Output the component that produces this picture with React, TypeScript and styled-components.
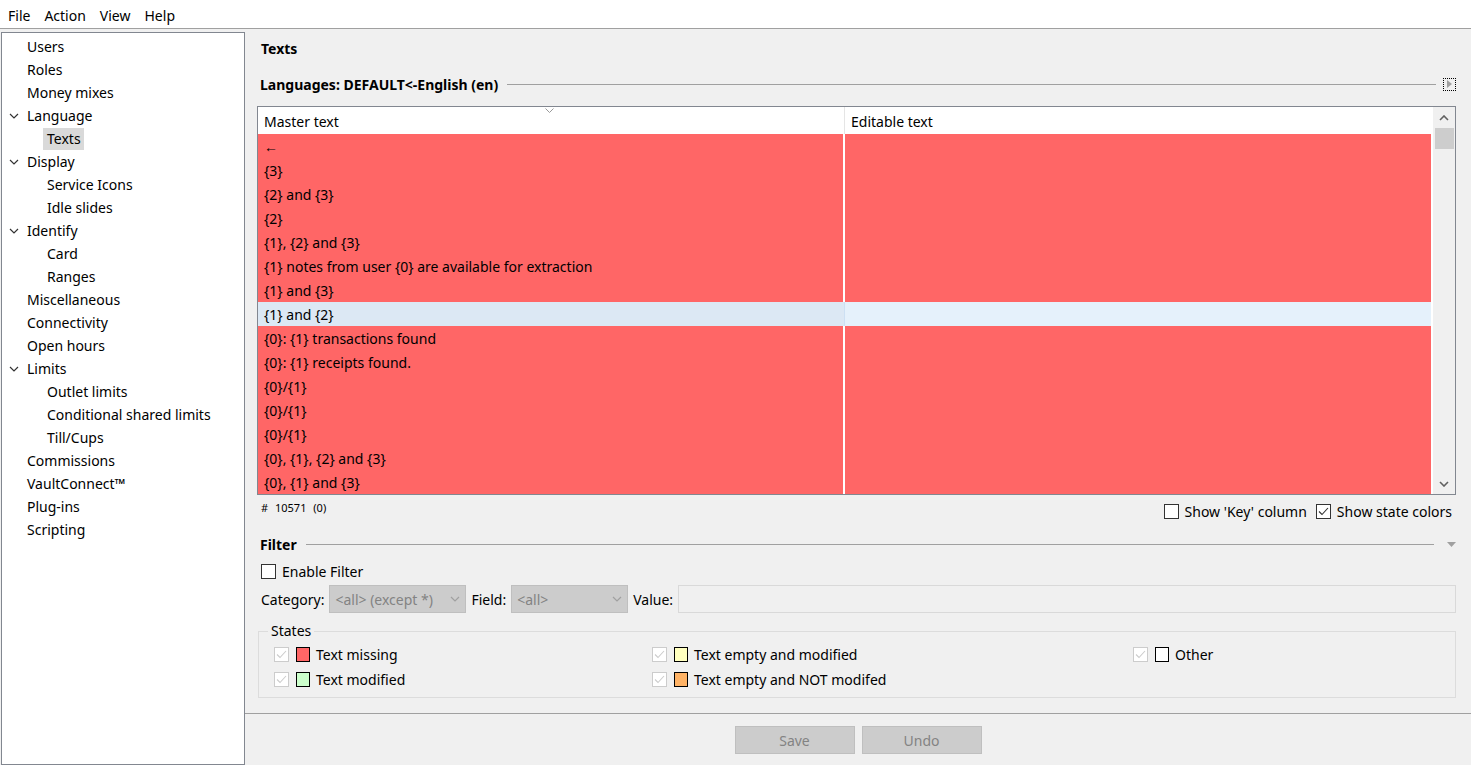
import React from "react";
import styled, { createGlobalStyle } from "styled-components";

const GlobalStyle = createGlobalStyle`
  html, body { margin: 0; padding: 0; }
  body {
    font-family: "Segoe UI", "Noto Sans", "Open Sans", sans-serif;
    font-size: 14px;
    color: #000;
    background: #f0f0f0;
  }
`;

const Window = styled.div`
  width: 1471px;
  height: 765px;
  display: flex;
  flex-direction: column;
  overflow: hidden;
`;

const MenuBar = styled.div`
  height: 29px;
  background: #fff;
  border-bottom: 1px solid #a0a0a0;
  display: flex;
  align-items: center;
  padding: 3px 0 0 1px;
  box-sizing: border-box;
`;

const MenuItem = styled.div`
  padding: 0 7px;
  line-height: 26px;
`;

const Body = styled.div`
  flex: 1;
  display: flex;
  padding-top: 3px;
  min-height: 0;
`;

const Tree = styled.div`
  width: 244px;
  margin-left: 1px;
  background: #fff;
  border: 1px solid #828790;
  box-sizing: border-box;
  padding-top: 2px;
`;

const TreeRow = styled.div<{ $depth: number }>`
  height: 23px;
  display: flex;
  align-items: center;
  padding-left: ${(p) => (p.$depth === 0 ? 1 : 41)}px;
`;

const Chevron = styled.span`
  width: 20px;
  display: inline-flex;
  justify-content: center;
  margin-left: 1px;
  margin-right: -1px;
`;

const TreeLabel = styled.span<{ $selected?: boolean }>`
  padding: 1px 3px 2px 4px;
  background: ${(p) => (p.$selected ? "#d9d9d9" : "transparent")};
`;

const Main = styled.div`
  flex: 1;
  display: flex;
  flex-direction: column;
  min-width: 0;
`;

const Content = styled.div`
  flex: 1;
  padding: 5px 15px 0 12px;
  display: flex;
  flex-direction: column;
`;

const PageTitle = styled.div`
  font-weight: bold;
  height: 24px;
  line-height: 24px;
  padding-left: 4px;
  margin-bottom: 11px;
`;

const SectionHead = styled.div`
  display: flex;
  align-items: center;
  height: 24px;
  font-weight: bold;
  padding-left: 3px;
  gap: 9px;
`;

const SectionLine = styled.div`
  flex: 1;
  height: 1px;
  background: #a0a0a0;
`;

const ExpandIcon = styled.div`
  width: 11px;
  height: 11px;
  border: 1px dotted #000;
  display: flex;
  align-items: center;
  justify-content: center;
  margin-left: -2px;
`;

const TableBox = styled.div`
  margin-top: 10px;
  height: 389px;
  border: 1px solid #828790;
  background: #fff;
  display: flex;
  box-sizing: border-box;
  overflow: hidden;
`;

const TableMain = styled.div`
  flex: 1;
  display: flex;
  flex-direction: column;
  min-width: 0;
`;

const HeaderRow = styled.div`
  height: 27px;
  flex-shrink: 0;
  display: grid;
  grid-template-columns: 587px 1fr;
  position: relative;
`;

const HeaderCell = styled.div<{ $last?: boolean }>`
  padding-left: 6px;
  display: flex;
  align-items: flex-end;
  padding-bottom: 3px;
  border-right: ${(p) => (p.$last ? "none" : "1px solid #e5e5e5")};
`;

const SortMark = styled.svg`
  position: absolute;
  left: 287px;
  top: 1px;
`;

const Row = styled.div`
  height: 24px;
  flex-shrink: 0;
  display: grid;
  grid-template-columns: 587px 1fr;
`;

const Cell = styled.div<{ $bg: string; $last?: boolean; $selected?: boolean }>`
  background: ${(p) => p.$bg};
  padding-left: 6px;
  display: flex;
  align-items: center;
  white-space: nowrap;
  overflow: hidden;
  border-right: ${(p) =>
    p.$last ? "none" : p.$selected ? "1px solid #cde0f3" : "2px solid #fff"};
  box-sizing: border-box;
`;

const ScrollBar = styled.div`
  width: 22px;
  margin-left: 2px;
  background: #f0f0f0;
  display: flex;
  flex-direction: column;
  align-items: center;
`;

const ScrollBtn = styled.div`
  height: 21px;
  width: 100%;
  display: flex;
  align-items: center;
  justify-content: center;
`;

const ScrollTrack = styled.div`
  flex: 1;
  width: 100%;
  display: flex;
  justify-content: center;
`;

const Thumb = styled.div`
  width: 19px;
  height: 21px;
  background: #cdcdcd;
`;

const StatusRow = styled.div`
  display: flex;
  justify-content: space-between;
  align-items: center;
  height: 30px;
  padding-left: 4px;
`;

const Count = styled.div`
  font-size: 11px;
  margin-top: -5px;
  word-spacing: 4px;
`;

const CheckGroup = styled.div`
  display: flex;
  gap: 9px;
  margin-right: 4px;
  margin-top: 3px;
`;

const CheckLabel = styled.label`
  display: flex;
  align-items: center;
  gap: 6px;
  color: #000;
`;

const Box = styled.span<{ $disabled?: boolean }>`
  width: 13px;
  height: 13px;
  border: 1px solid ${(p) => (p.$disabled ? "#cccccc" : "#333")};
  background: #fff;
  display: inline-flex;
  align-items: center;
  justify-content: center;
  box-sizing: content-box;
`;

const Swatch = styled.span<{ $color: string }>`
  width: 12px;
  height: 13px;
  border: 1px solid #000;
  background: ${(p) => p.$color};
  margin-left: 1px;
`;

const FilterHead = styled(SectionHead)`
  margin-top: 7px;
`;

const FilterArrow = styled.svg`
  margin-left: 4px;
`;

const EnableRow = styled.div`
  height: 28px;
  display: flex;
  align-items: center;
  padding-left: 4px;
  margin-top: 1px;
`;

const FieldRow = styled.div`
  display: flex;
  align-items: center;
  gap: 5px;
  padding-left: 4px;
  height: 28px;
`;

const Select = styled.div<{ $w: number }>`
  width: ${(p) => p.$w}px;
  height: 28px;
  box-sizing: border-box;
  background: #cccccc;
  border: 1px solid #bfbfbf;
  color: #838383;
  display: flex;
  align-items: center;
  justify-content: space-between;
  padding: 0 5px;
`;

const ValueInput = styled.div`
  flex: 1;
  height: 26px;
  border: 1px solid #d9d9d9;
  background: #f0f0f0;
`;

const StatesBox = styled.fieldset`
  margin: 11px 0 0 1px;
  border: 1px solid #dcdcdc;
  padding: 4px 0 5px 15px;
  display: grid;
  grid-template-columns: 378px 481px 1fr;
  grid-auto-rows: 25px;
  align-items: center;
`;

const Legend = styled.legend`
  padding: 0 3px;
  margin-left: -6px;
  line-height: 14px;
`;

const Footer = styled.div`
  height: 52px;
  flex-shrink: 0;
  border-top: 1px solid #a0a0a0;
  display: flex;
  justify-content: center;
  gap: 7px;
  padding-top: 12px;
  box-sizing: border-box;
`;

const Button = styled.div`
  width: 120px;
  height: 28px;
  box-sizing: border-box;
  background: #cccccc;
  border: 1px solid #bfbfbf;
  color: #838383;
  display: flex;
  align-items: center;
  justify-content: center;
`;

const ChevronDown = ({ color = "#333" }: { color?: string }) => (
  <svg width="10" height="6" viewBox="0 0 10 6">
    <path d="M1 1l4 4 4-4" fill="none" stroke={color} strokeWidth="1.2" />
  </svg>
);

const Tick = ({ color }: { color: string }) => (
  <svg width="11" height="9" viewBox="0 0 11 9">
    <path d="M1 4.5l3 3 6-6.5" fill="none" stroke={color} strokeWidth="1.1" />
  </svg>
);

const treeItems: { label: string; depth: number; open?: boolean; selected?: boolean }[] = [
  { label: "Users", depth: 0 },
  { label: "Roles", depth: 0 },
  { label: "Money mixes", depth: 0 },
  { label: "Language", depth: 0, open: true },
  { label: "Texts", depth: 1, selected: true },
  { label: "Display", depth: 0, open: true },
  { label: "Service Icons", depth: 1 },
  { label: "Idle slides", depth: 1 },
  { label: "Identify", depth: 0, open: true },
  { label: "Card", depth: 1 },
  { label: "Ranges", depth: 1 },
  { label: "Miscellaneous", depth: 0 },
  { label: "Connectivity", depth: 0 },
  { label: "Open hours", depth: 0 },
  { label: "Limits", depth: 0, open: true },
  { label: "Outlet limits", depth: 1 },
  { label: "Conditional shared limits", depth: 1 },
  { label: "Till/Cups", depth: 1 },
  { label: "Commissions", depth: 0 },
  { label: "VaultConnect™", depth: 0 },
  { label: "Plug-ins", depth: 0 },
  { label: "Scripting", depth: 0 },
];

const rows = [
  "←",
  "{3}",
  "{2} and {3}",
  "{2}",
  "{1}, {2} and {3}",
  "{1} notes from user {0} are available for extraction",
  "{1} and {3}",
  "{1} and {2}",
  "{0}: {1} transactions found",
  "{0}: {1} receipts found.",
  "{0}/{1}",
  "{0}/{1}",
  "{0}/{1}",
  "{0}, {1}, {2} and {3}",
  "{0}, {1} and {3}",
];

const SELECTED = 7;
const RED = "#ff6666";

const states = [
  { label: "Text missing", color: RED },
  { label: "Text empty and modified", color: "#ffffbf" },
  { label: "Other", color: "#ffffff" },
  { label: "Text modified", color: "#ccffcc" },
  { label: "Text empty and NOT modifed", color: "#ffb366" },
];

export default function App() {
  return (
    <Window>
      <GlobalStyle />
      <MenuBar>
        {["File", "Action", "View", "Help"].map((m) => (
          <MenuItem key={m}>{m}</MenuItem>
        ))}
      </MenuBar>
      <Body>
        <Tree>
          {treeItems.map((t) => (
            <TreeRow key={t.label} $depth={t.depth}>
              {t.depth === 0 && (
                <Chevron>{t.open && <ChevronDown />}</Chevron>
              )}
              <TreeLabel $selected={t.selected}>{t.label}</TreeLabel>
            </TreeRow>
          ))}
        </Tree>
        <Main>
          <Content>
            <PageTitle>Texts</PageTitle>
            <SectionHead>
              <span>Languages: DEFAULT&lt;-English (en)</span>
              <SectionLine />
              <ExpandIcon>
                <svg width="5" height="8" viewBox="0 0 5 8">
                  <path d="M0 0l5 4-5 4z" fill="#a0a0a0" />
                </svg>
              </ExpandIcon>
            </SectionHead>
            <TableBox>
              <TableMain>
                <HeaderRow>
                  <HeaderCell>Master text</HeaderCell>
                  <HeaderCell $last>Editable text</HeaderCell>
                  <SortMark width="9" height="5" viewBox="0 0 9 5">
                    <path d="M0.5 0.5l4 4 4-4" fill="none" stroke="#999" strokeWidth="1" />
                  </SortMark>
                </HeaderRow>
                {rows.map((r, i) => {
                  const sel = i === SELECTED;
                  return (
                    <Row key={i}>
                      <Cell $bg={sel ? "#dce8f4" : RED} $selected={sel}>
                        {r}
                      </Cell>
                      <Cell $last $bg={sel ? "#e5f1fb" : RED} />
                    </Row>
                  );
                })}
              </TableMain>
              <ScrollBar>
                <ScrollBtn>
                  <svg width="10" height="6" viewBox="0 0 10 6">
                    <path d="M1 5l4-4 4 4" fill="none" stroke="#606060" strokeWidth="1.6" />
                  </svg>
                </ScrollBtn>
                <ScrollTrack>
                  <Thumb />
                </ScrollTrack>
                <ScrollBtn>
                  <svg width="10" height="6" viewBox="0 0 10 6">
                    <path d="M1 1l4 4 4-4" fill="none" stroke="#606060" strokeWidth="1.6" />
                  </svg>
                </ScrollBtn>
              </ScrollBar>
            </TableBox>
            <StatusRow>
              <Count># 10571 (0)</Count>
              <CheckGroup>
                <CheckLabel>
                  <Box />
                  Show 'Key' column
                </CheckLabel>
                <CheckLabel>
                  <Box>
                    <Tick color="#333" />
                  </Box>
                  Show state colors
                </CheckLabel>
              </CheckGroup>
            </StatusRow>
            <FilterHead>
              <span>Filter</span>
              <SectionLine />
              <FilterArrow width="9" height="5" viewBox="0 0 9 5">
                <path d="M0 0h9l-4.5 5z" fill="#a0a0a0" />
              </FilterArrow>
            </FilterHead>
            <EnableRow>
              <CheckLabel>
                <Box />
                Enable Filter
              </CheckLabel>
            </EnableRow>
            <FieldRow>
              <span>Category:</span>
              <Select $w={137}>
                <span>&lt;all&gt; (except *)</span>
                <ChevronDown color="#a0a0a0" />
              </Select>
              <span>Field:</span>
              <Select $w={117}>
                <span>&lt;all&gt;</span>
                <ChevronDown color="#a0a0a0" />
              </Select>
              <span>Value:</span>
              <ValueInput />
            </FieldRow>
            <StatesBox>
              <Legend>States</Legend>
              {states.map((s) => (
                <CheckLabel key={s.label}>
                  <Box $disabled>
                    <Tick color="#cccccc" />
                  </Box>
                  <Swatch $color={s.color} />
                  {s.label}
                </CheckLabel>
              ))}
            </StatesBox>
          </Content>
          <Footer>
            <Button>Save</Button>
            <Button>Undo</Button>
          </Footer>
        </Main>
      </Body>
    </Window>
  );
}
